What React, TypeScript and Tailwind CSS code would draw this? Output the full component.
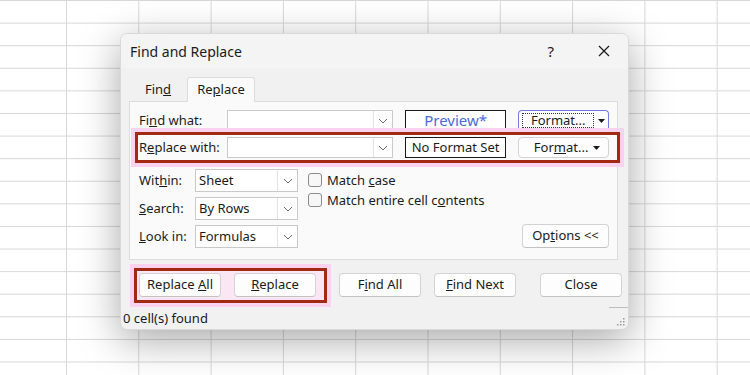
import React from 'react';

const font = { fontFamily: '"Noto Sans", "Open Sans", sans-serif' };

const Chevron: React.FC = () => (
  <svg width="10" height="6" viewBox="0 0 10 6" className="text-[#6b6b6b]">
    <polyline points="1,1 5,5 9,1" fill="none" stroke="currentColor" strokeWidth="1" />
  </svg>
);

const Caret: React.FC = () => (
  <svg width="7" height="4" viewBox="0 0 7 4">
    <polygon points="0,0 7,0 3.5,4" fill="#1a1a1a" />
  </svg>
);

const ComboInput: React.FC = () => (
  <div className="flex h-[21px] w-[167px] items-stretch border border-[#c9c9c9] bg-white">
    <div className="flex-1" />
    <div className="flex w-[19px] items-center justify-center border-l border-[#e4e4e4]">
      <Chevron />
    </div>
  </div>
);

const Select: React.FC<{ value: string }> = ({ value }) => (
  <div className="flex h-[23px] w-[103px] items-stretch border border-[#c9c9c9] bg-white">
    <div className="flex flex-1 items-center pl-[3px] text-[13px] text-[#1a1a1a]">{value}</div>
    <div className="flex w-[20px] items-center justify-center border-l border-[#e4e4e4]">
      <Chevron />
    </div>
  </div>
);

const Button: React.FC<{ children: React.ReactNode; className?: string }> = ({ children, className }) => (
  <div
    className={
      'flex h-[24px] w-[82px] items-center justify-center rounded-[4px] border border-[#d3d3d3] border-b-[#c2c2c2] bg-[#fdfdfd] text-[13px] text-[#1a1a1a] ' +
      (className || '')
    }
  >
    <span>{children}</span>
  </div>
);

const Check: React.FC<{ children: React.ReactNode }> = ({ children }) => (
  <div className="flex h-[14px] items-center gap-[5px]">
    <div className="h-[14px] w-[14px] rounded-[3px] border border-[#8c8c8c] bg-[#f7f7f7]" />
    <span className="text-[13px] leading-none text-[#1a1a1a]">{children}</span>
  </div>
);

export default function App() {
  return (
    <div
      style={font}
      className="h-[375px] w-[750px] overflow-hidden bg-white bg-[linear-gradient(to_right,#d7d7d7_1px,transparent_1px),linear-gradient(to_bottom,#d7d7d7_1px,transparent_1px)] bg-[size:72.3px_22.6px] bg-[position:66px_0px] pl-[120px] pt-[33px]"
    >
      <div className="flex h-[297px] w-[509px] flex-col overflow-hidden rounded-[7px] border border-[#d9d9d9] bg-[#f1f1f1] shadow-[0_10px_40px_rgba(0,0,0,0.35)]">
        {/* title bar */}
        <div className="flex h-[34px] shrink-0 items-center bg-[#f4f4f4] pl-[9px] text-[#1a1a1a]">
          <span className="text-[14px]">Find and Replace</span>
          <span className="ml-auto mr-[44px] text-[15px]">?</span>
          <svg width="12" height="12" viewBox="0 0 12 12" className="mr-[18px]">
            <path d="M1 1 L11 11 M11 1 L1 11" stroke="#1a1a1a" strokeWidth="1.2" />
          </svg>
        </div>

        {/* tabs */}
        <div className="ml-[8px] mt-[9px] flex h-[24px] items-end text-[13px] text-[#1a1a1a]">
          <div className="flex h-[22px] w-[58px] items-center justify-center">
            <span>
              Fin<u>d</u>
            </span>
          </div>
          <div className="relative z-10 -mb-px flex h-[25px] w-[68px] items-center justify-center rounded-t-[3px] border border-b-0 border-[#dcdcdc] bg-[#fafafa]">
            <span>
              Re<u>p</u>lace
            </span>
          </div>
        </div>

        {/* tab panel */}
        <div className="ml-[8px] mr-[10px] flex h-[159px] flex-col border border-[#dcdcdc] bg-[#fafafa] pl-[9px] pr-[8px] pt-[8px] text-[13px] text-[#1a1a1a]">
          <div className="flex h-[21px] items-center">
            <span className="w-[88px]">
              Fi<u>n</u>d what:
            </span>
            <ComboInput />
            <div className="ml-[12px] flex h-[21px] w-[102px] items-center justify-center border-[1.5px] border-[#1a1a1a] bg-white text-[15px] font-normal text-[#4a6ad8] underline decoration-[#c24fc4] underline-offset-[3px]">
              Preview*
            </div>
            <div className="ml-[12px] flex h-[21px] w-[91px] items-center rounded-[4px] border-[1.5px] border-[#7579e6] border-b-[#d98bd9] bg-white pl-[3px] pr-[2px]">
              <div className="flex h-[15px] flex-1 items-center justify-center border border-dotted border-[#333]">
                Format...
              </div>
              <div className="ml-[2px] flex w-[10px] items-center justify-center">
                <Caret />
              </div>
            </div>
          </div>

          <div className="-ml-[4px] -mr-[11px] mt-[1px] flex items-center border-[3px] border-[#a32a12] py-[2px] pl-[1px] pr-[8px] shadow-[0_0_0_4px_#fbd2ef]">
            <span className="w-[88px]">
              R<u>e</u>place with:
            </span>
            <ComboInput />
            <div className="ml-[12px] flex h-[21px] w-[102px] items-center justify-center border-[1.5px] border-[#1a1a1a] bg-white">
              No Format Set
            </div>
            <div className="ml-[12px] flex h-[21px] w-[91px] items-center rounded-[4px] border border-[#d3d3d3] bg-[#fdfdfd] pl-[10px] pr-[8px]">
              <span className="flex-1 text-center">
                For<u>m</u>at...
              </span>
              <Caret />
            </div>
          </div>

          <div className="mt-[6px] flex">
            <div className="flex flex-col gap-[5px]">
              <div className="flex items-center">
                <span className="w-[56px]">
                  Wit<u>h</u>in:
                </span>
                <Select value="Sheet" />
              </div>
              <div className="flex items-center">
                <span className="w-[56px]">
                  <u>S</u>earch:
                </span>
                <Select value="By Rows" />
              </div>
              <div className="flex items-center">
                <span className="w-[56px]">
                  <u>L</u>ook in:
                </span>
                <Select value="Formulas" />
              </div>
            </div>
            <div className="ml-[10px] flex flex-col gap-[6px] pt-[4px]">
              <Check>
                Match <u>c</u>ase
              </Check>
              <Check>
                Match entire cell c<u>o</u>ntents
              </Check>
            </div>
            <div className="ml-auto flex items-end">
              <Button className="w-[87px]">
                Op<u>t</u>ions &lt;&lt;
              </Button>
            </div>
          </div>
        </div>

        {/* action buttons */}
        <div className="ml-[13px] mt-[8px] flex items-start">
          <div className="flex gap-[13px] border-[3px] border-[#a32a12] bg-[#fbe6f4] pb-[3px] pl-[2px] pr-[8px] pt-[2px] shadow-[0_0_0_4px_#fbd2ef]">
            <Button>
              Replace <u>A</u>ll
            </Button>
            <Button>
              <u>R</u>eplace
            </Button>
          </div>
          <Button className="ml-[12px] mt-[5px]">
            F<u>i</u>nd All
          </Button>
          <Button className="ml-[13px] mt-[5px]">
            <u>F</u>ind Next
          </Button>
          <Button className="ml-[24px] mt-[5px]">Close</Button>
        </div>

        {/* status bar */}
        <div className="relative mt-auto flex h-[20px] items-center pl-[2px] text-[13px] text-[#1a1a1a]">
          <span>0 cell(s) found</span>
          <div className="absolute right-0 -top-[2px] h-px w-[19px] bg-[#bdbdbd]" />
          <svg width="8" height="8" viewBox="0 0 8 8" className="absolute bottom-[3px] right-[3px]">
            <rect x="6" y="0" width="1.5" height="1.5" fill="#9a9a9a" />
            <rect x="3" y="3" width="1.5" height="1.5" fill="#9a9a9a" />
            <rect x="6" y="3" width="1.5" height="1.5" fill="#9a9a9a" />
            <rect x="0" y="6" width="1.5" height="1.5" fill="#9a9a9a" />
            <rect x="3" y="6" width="1.5" height="1.5" fill="#9a9a9a" />
            <rect x="6" y="6" width="1.5" height="1.5" fill="#9a9a9a" />
          </svg>
        </div>
      </div>
    </div>
  );
}
